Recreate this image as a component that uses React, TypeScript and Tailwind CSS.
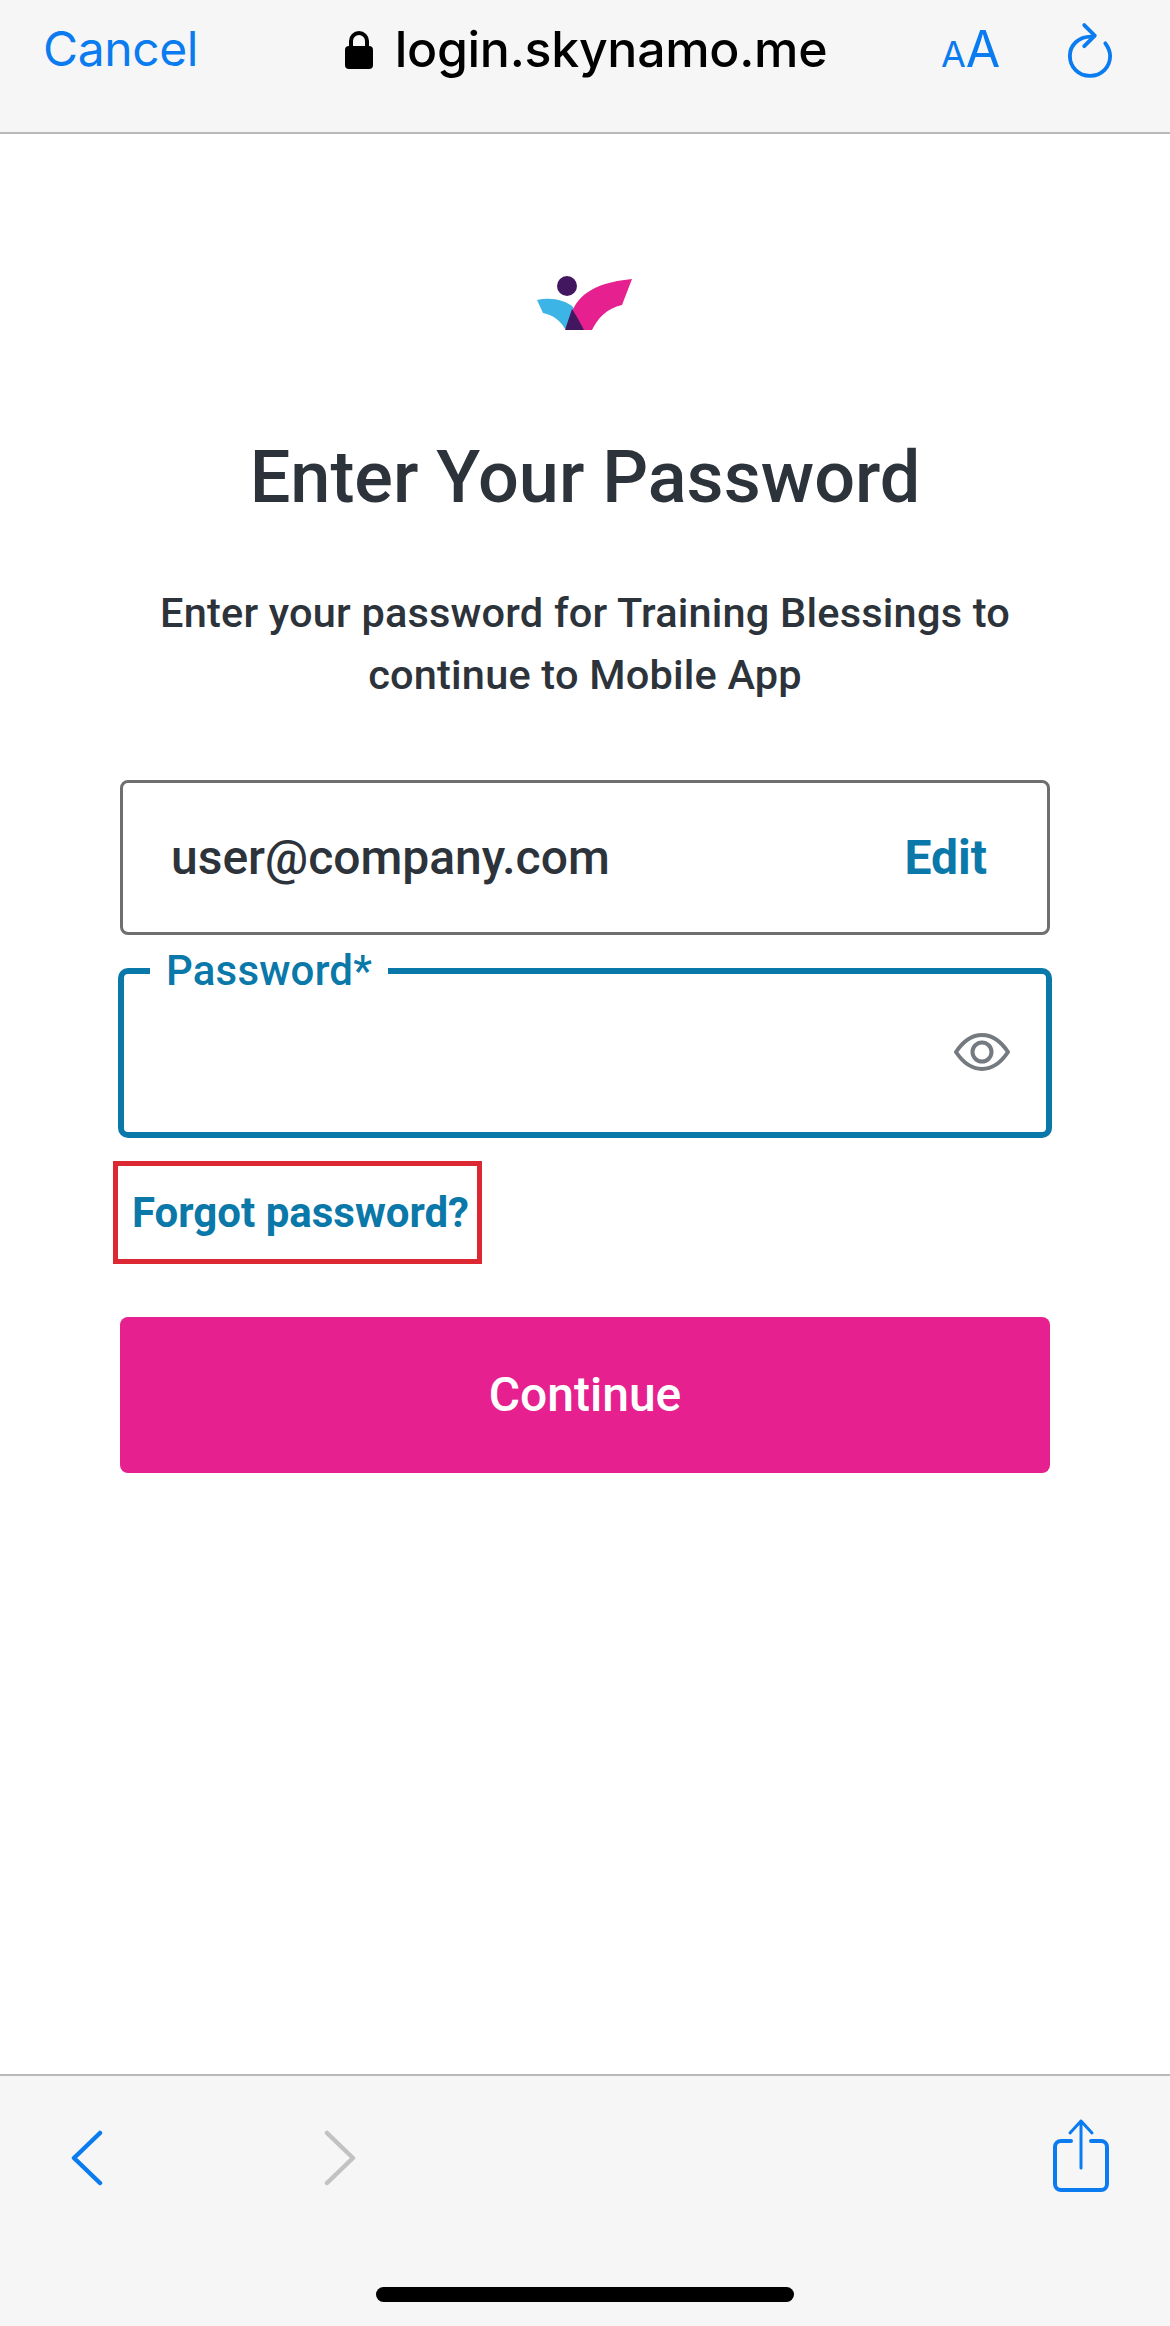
import { useState } from "react";

const ios = "font-['Inter','Liberation_Sans',sans-serif]";

function Logo() {
  return (
    <svg width="100" height="60" viewBox="0 0 100 60">
      <circle cx="32" cy="13" r="10" fill="#43175f" />
      <path d="M2 27 C16 24 30 27 38 34 L42 42 L30 56 C26 48 18 42 8 40 Z" fill="#3cb4e5" />
      <path d="M37 39 C42 26 54 10 97 6 L87 32 C72 35 62 46 57 57 L46 57 Z" fill="#e6208e" />
      <path d="M37 36 L42 44 L49 57 L30 57 Z" fill="#43175f" />
    </svg>
  );
}

function Eye() {
  return (
    <svg width="56" height="40" viewBox="0 0 56 40" fill="none" stroke="#747a80" strokeWidth="4">
      <path d="M2 20 C10 8 18 3 28 3 C38 3 46 8 54 20 C46 32 38 37 28 37 C18 37 10 32 2 20 Z" />
      <circle cx="28" cy="20" r="9.5" />
    </svg>
  );
}

export default function App() {
  const [password, setPassword] = useState("");

  return (
    <div className="w-[1170px] h-[2326px] flex flex-col bg-white font-['Roboto',sans-serif] text-[#2d333a]">
      {/* Safari top bar */}
      <div className={`h-[134px] shrink-0 bg-[#f6f6f7] border-b-2 border-[#b9b9b9] flex items-start pt-[21px] pl-[43px] pr-[57px] ${ios}`}>
        <span className="w-[170px] text-[48px] leading-[56px] text-[#0a7cf0] font-normal tracking-[-0.4px]">Cancel</span>
        <div className="flex-1 flex items-center justify-center gap-[22px] pl-[22px]">
          <svg width="28" height="38" viewBox="0 0 28 38" className="mt-[2px]">
            <path d="M6 17 V10 a8 8 0 0 1 16 0 V17" fill="none" stroke="#000" strokeWidth="4" />
            <rect x="0" y="15" width="28" height="23" rx="4" fill="#000" />
          </svg>
          <span className="text-[50px] leading-[56px] font-medium text-black tracking-[-0.3px]">login.skynamo.me</span>
        </div>
        <div className="w-[176px] flex items-start justify-between">
          <span className="text-[#0a7cf0] font-normal flex items-baseline leading-[56px] ml-[4px]">
            <span className="text-[36px]">A</span>
            <span className="text-[50px]">A</span>
          </span>
          <svg width="46" height="58" viewBox="0 0 48 58" fill="none" stroke="#0a7cf0" strokeWidth="4" strokeLinecap="round" strokeLinejoin="round" className="mt-[1px]">
            <path d="M25 14 C12 14 3 23 3 34 C3 46 12 55 24 55 C36 55 45 46 45 34 C45 29 43 25 40 21" />
            <path d="M18 2 L29 13 L18 24" />
          </svg>
        </div>
      </div>

      {/* Login page */}
      <div className="flex-1 flex flex-col items-center pt-[139px]">
        <Logo />
        <h1 className="mt-[103px] text-[72px] leading-[84px] font-medium">Enter Your Password</h1>
        <p className="mt-[62px] w-[900px] text-center text-[41.5px] leading-[62px] font-medium tracking-[0.2px]">
          Enter your password for Training Blessings to
          <br />
          continue to Mobile App
        </p>

        <div className="mt-[74px] w-[930px] h-[155px] shrink-0 border-[3px] border-[#6f6f6f] rounded-[8px] flex items-center justify-between pl-[48px] pr-[60px]">
          <span className="text-[48px] font-medium">user@company.com</span>
          <button className="text-[48px] font-bold text-[#0a78a8]">Edit</button>
        </div>

        <fieldset className="mt-[14px] w-[934px] h-[189px] shrink-0 border-[6px] border-[#0a78a8] rounded-[10px]">
          <legend className="ml-[26px] px-[16px] text-[42px] leading-[44px] font-medium text-[#0a78a8] tracking-[0.2px]">Password*</legend>
          <div className="h-[118px] flex items-center px-[36px]">
            <input
              className="flex-1 min-w-0 text-[44px] outline-none"
              type="password"
              aria-label="Password"
              value={password}
              onChange={(e) => setPassword(e.target.value)}
            />
            <Eye />
          </div>
        </fieldset>

        <div className="mt-[23px] w-[934px] shrink-0">
          <a className="inline-flex items-center h-[103px] w-[369px] -ml-[5px] border-[5px] border-[#dc2833] pl-[14px] text-[42px] font-bold text-[#0a78a8] whitespace-nowrap">
            Forgot password?
          </a>
        </div>

        <button className="mt-[53px] w-[930px] h-[156px] shrink-0 rounded-[8px] bg-[#e6208e] text-white text-[48px] font-medium">
          Continue
        </button>
      </div>

      {/* Safari bottom bar */}
      <div className="h-[252px] shrink-0 bg-[#f6f6f7] border-t-2 border-[#b9b9b9] flex flex-col">
        <div className="flex items-start pl-[70px] pr-[60px] pt-[47px]">
          <svg width="34" height="56" viewBox="0 0 34 56" fill="none" stroke="#0a7cf0" strokeWidth="4.5" strokeLinecap="round" strokeLinejoin="round" className="mt-[7px]">
            <path d="M30 3 L4 28 L30 53" />
          </svg>
          <svg width="34" height="56" viewBox="0 0 34 56" fill="none" stroke="#c2c2c2" strokeWidth="4.5" strokeLinecap="round" strokeLinejoin="round" className="ml-[219px] mt-[7px]">
            <path d="M4 3 L30 28 L4 53" />
          </svg>
          <svg width="58" height="75" viewBox="0 0 58 75" fill="none" stroke="#0a7cf0" strokeLinecap="round" strokeLinejoin="round" className="ml-auto -mt-[5px]">
            <path strokeWidth="4" d="M19 23 H9 a6 6 0 0 0 -6 6 V66 a6 6 0 0 0 6 6 H49 a6 6 0 0 0 6 -6 V29 a6 6 0 0 0 -6 -6 H39" />
            <path strokeWidth="3" d="M29 50 V3 M18 15 L29 3 L40 15" />
          </svg>
        </div>
        <div className="mt-auto mb-[24px] mx-auto w-[418px] h-[15px] rounded-full bg-black" />
      </div>
    </div>
  );
}
